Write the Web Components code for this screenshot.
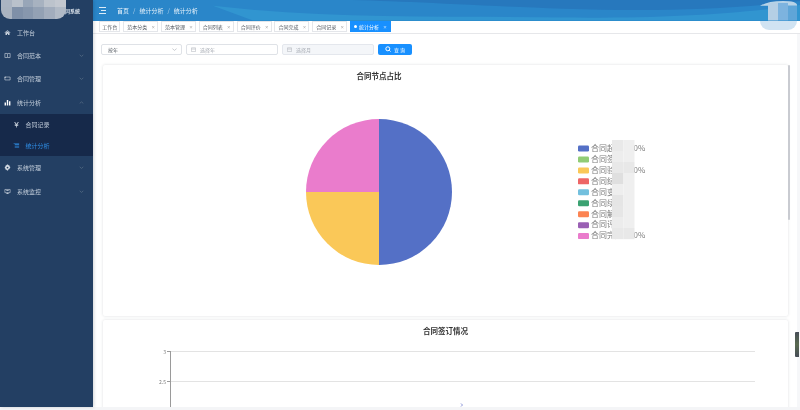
<!DOCTYPE html>
<html lang="zh">
<head>
<meta charset="utf-8">
<title>统计分析</title>
<style>
  html, body { margin: 0; height: 100%; }
  body {
    background: #f4f5f7;
    font-family: "Noto Sans CJK SC", "Noto Sans", sans-serif;
    overflow: hidden;
  }
</style>
</head>
<body>
<app-shell>
  <side-menu slot="side">
    <side-item icon="home" label="工作台"></side-item>
    <side-item icon="book" label="合同范本" arrow="down"></side-item>
    <side-item icon="card" label="合同管理" arrow="down"></side-item>
    <side-item icon="bars" label="统计分析" arrow="up" strong></side-item>
    <side-group>
      <side-item sub icon="yen" label="合同记录"></side-item>
      <side-item sub active icon="doc" label="统计分析"></side-item>
    </side-group>
    <side-item icon="gear" label="系统管理" arrow="down"></side-item>
    <side-item icon="screen" label="系统监控" arrow="down"></side-item>
  </side-menu>

  <top-bar slot="top"></top-bar>

  <tag-bar slot="top">
    <tag-item plain>工作台</tag-item>
    <tag-item>范本分类</tag-item>
    <tag-item>范本管理</tag-item>
    <tag-item>合同列表</tag-item>
    <tag-item>合同评价</tag-item>
    <tag-item>合同完成</tag-item>
    <tag-item>合同记录</tag-item>
    <tag-item active>统计分析</tag-item>
  </tag-bar>

  <filter-bar></filter-bar>

  <chart-card heading="合同节点占比" align="pie" height="251"><pie-chart></pie-chart></chart-card>
  <chart-card heading="合同签订情况" height="120"><line-chart></line-chart></chart-card>
</app-shell>

<script>
(function() {
  const ICONS = {
    home: '<path d="M1 6.2 6 2l5 4.2-.6.7L6 3.3 1.600 6.900z"/><path d="M2.600 7 6 4.200 9.400 7v3.400H7V8H5v2.400H2.600z"/>',
    book: '<path fill="none" stroke="currentColor" d="M1.500 2.500h4l.5.6.5-.6h4v7h-4l-.5.5-.5-.5h-4zM6 3v6.500"/>',
    card: '<path fill="none" stroke="currentColor" d="M1.500 3.500h9v5h-9z"/><path d="M1 3h2v1.500H1z"/>',
    bars: '<path d="M1 6h2.400v5H1zM4.800 1.500h2.400V11H4.800zM8.600 4h2.400v7H8.600z"/>',
    yen: '<path d="M2 1.500h1.600L6 5l2.400-3.500H10L7.400 5.400H9v1H6.600v1H9v1H6.600V11H5.400V8.400H3v-1h2.400v-1H3v-1h1.600z"/>',
    doc: '<path d="M1 1.500h9.500v1.200H1zM3 4h7.500v1.200H3zM3 6.400h7.500v1.200H3zM3 8.800h7.500V10H3z"/>',
    gear: '<path fill-rule="evenodd" d="M5 1h2l.3 1.400 1-.5L9.800 3.300l-.6 1 1.400.4v2l-1.400.4.600 1-1.500 1.400-1-.5L7 11H5l-.3-1.400-1 .5-1.500-1.400.6-1-1.400-.4v-2l1.400-.4-.6-1L3.700 1.900l1 .5zM6 4.500a1.500 1.500 0 1 0 0 3 1.500 1.500 0 0 0 0-3z"/>',
    screen: '<path fill="none" stroke="currentColor" d="M1.500 2.500h9v5.500h-9z"/><path d="M5.400 8h1.200v1.500H8.500v.8h-5v-.8h1.900zM4 4h4v1H4z"/>'
  };

  class AppShell extends HTMLElement {
    constructor() {
      super();
      this.attachShadow({ mode: "open" });
      this.shadowRoot.innerHTML = `
      <style>
        :host {
          display: flex;
          height: 407px;
          background: #fff;
          filter: blur(.3px);
        }
        .side { flex: 0 0 93px; width: 93px; box-shadow: 1px 0 3px rgba(0, 21, 41, .18); z-index: 1; }
        .main { flex: 1; min-width: 0; display: flex; flex-direction: column; overflow: hidden; position: relative; }
        .scroll { display: flex; flex-direction: column; padding: 0 12px 0 10px; overflow: hidden; flex: 1; }
        .thumb { position: absolute; right: 10px; top: 65px; width: 2px; height: 155px; background: #c9cbd1; border-radius: 1px; }
        .edge { position: absolute; right: 0; top: 34px; bottom: 0; width: 3px; background: #f6f7f9; }
        .widget {
          position: absolute; right: 1px; top: 332px; width: 4px; height: 25px;
          background: linear-gradient(#474d57, #5a6a50 50%, #474d57);
          border-radius: 1px 0 0 1px;
        }
      </style>
      <div class="side"><slot name="side"></slot></div>
      <div class="main">
        <slot name="top"></slot>
        <div class="scroll"><slot></slot></div>
        <div class="edge"></div>
        <div class="thumb"></div>
        <div class="widget"></div>
      </div>`;
    }
  }

  class SideMenu extends HTMLElement {
    constructor() {
      super();
      this.attachShadow({ mode: "open" });
      this.shadowRoot.innerHTML = `
      <style>
        :host { display: block; height: 100%; background: #233f63; overflow: hidden; }
        .logo { position: relative; height: 20.500px; display: flex; justify-content: flex-end; align-items: center; padding-right: 13px; color: #dfe6ee; font-size: 5px; font-weight: 700; }
        .mosaic {
          position: absolute; left: 1px; top: -6px; width: 65px; height: 25px; border-radius: 0 0 9px 9px; overflow: hidden;
          display: grid; grid-template-columns: repeat(6, 1fr); grid-template-rows: repeat(2, 1fr);
        }
        .mosaic i:nth-child(1) { background: #aab4c2; } .mosaic i:nth-child(2) { background: #b9c1cb; }
        .mosaic i:nth-child(3) { background: #98a6b8; } .mosaic i:nth-child(4) { background: #a7b2c0; }
        .mosaic i:nth-child(5) { background: #bcc3cc; } .mosaic i:nth-child(6) { background: #c3c8d0; }
        .mosaic i:nth-child(7) { background: #a9b3c0; } .mosaic i:nth-child(8) { background: #7f90a8; }
        .mosaic i:nth-child(9) { background: #8797ad; } .mosaic i:nth-child(10) { background: #93a1b4; }
        .mosaic i:nth-child(11) { background: #a2adbd; } .mosaic i:nth-child(12) { background: #b1bac6; }
      </style>
      <div class="logo"><div class="mosaic"><i></i><i></i><i></i><i></i><i></i><i></i><i></i><i></i><i></i><i></i><i></i><i></i></div><span>同系统</span></div>
      <slot></slot>`;
    }
  }

  class SideGroup extends HTMLElement {
    constructor() {
      super();
      this.attachShadow({ mode: "open" });
      this.shadowRoot.innerHTML = `
      <style>:host { display: block; background: #16294a; }</style><slot></slot>`;
    }
  }

  class SideItem extends HTMLElement {
    constructor() {
      super();
      this.attachShadow({ mode: "open" });
    }
    connectedCallback() {
      const sub = this.hasAttribute("sub");
      const active = this.hasAttribute("active");
      const arrow = this.getAttribute("arrow");
      const d = arrow === "up" ? "M1 4 4 1.500 7 4" : "M1 1.500 4 4 7 1.500";
      this.shadowRoot.innerHTML = `
      <style>
        :host {
          display: flex; align-items: center;
          height: ${sub ? 21 : 23.400}px;
          padding-left: ${sub ? 13 : 4}px;
          color: ${active ? "#2f8fe8" : "#c3cedb"};
          font-size: 6px;
        }
        svg.i { width: 7px; height: 7px; margin-right: ${sub ? 5.500 : 6}px; fill: currentColor; color: ${active ? "#2f8fe8" : "#d4dbe4"}; flex: none; }
        :host([strong]) svg.i { color: #fff; }
        span { flex: 1; }
        svg.a { width: 5px; height: 3px; margin-right: 9px; fill: none; stroke: #64798f; }
      </style>
      <svg class="i" viewBox="0 0 12 12">${ICONS[this.getAttribute("icon")] || ""}</svg>
      <span>${this.getAttribute("label")}</span>
      ${arrow ? `<svg class="a" viewBox="0 0 8 5"><path d="${d}"/></svg>` : ""}`;
    }
  }

  class TopBar extends HTMLElement {
    constructor() {
      super();
      this.attachShadow({ mode: "open" });
      this.shadowRoot.innerHTML = `
      <style>
        :host {
          display: flex; align-items: center; gap: 9px; position: relative; overflow: hidden; flex: none;
          height: 20.500px; padding-left: 6px;
          background: #2885c8; color: #e6f1fa; font-size: 6px;
        }
        .wave { position: absolute; inset: 0; width: 100%; height: 100%; }
        .burger, .crumbs { position: relative; }
        .burger { width: 7px; height: 7px; stroke: #dcecf8; fill: none; }
        .crumbs { display: flex; gap: 4px; margin-left: 2px; }
        .crumbs b { font-weight: 400; color: #bcd9ef; }
      </style>
      <svg class="wave" viewBox="0 0 707 21" preserveAspectRatio="none">
        <rect width="707" height="21" fill="#2a86c9"/>
        <path d="M0 0h707v1C640 10 560 12 470 9 360 5 300 0 240 0z" fill="#2778bd"/>
        <path d="M120 6C240 20 360 16 470 18 570 19 650 14 707 5v16H160z" fill="#3195d0"/>
        <path d="M667 6Q675 1 690 1T704 6z" fill="#b7d3e8"/>
        <rect x="675" y="3" width="10" height="18" fill="#b5cfe5"/>
        <rect x="685" y="3" width="10" height="18" fill="#7db3df"/>
        <rect x="695" y="6" width="9" height="15" fill="#5fa5d8"/>
      </svg>
      <svg class="burger" viewBox="0 0 7 7"><path d="M0 .5h7M2 3.500h5M0 6.500h7"/></svg>
      <div class="crumbs"><span>首页</span><b>/</b><span>统计分析</span><b>/</b><span>统计分析</span></div>`;
    }
  }

  class TagBar extends HTMLElement {
    constructor() {
      super();
      this.attachShadow({ mode: "open" });
      this.shadowRoot.innerHTML = `
      <style>
        :host {
          display: flex; align-items: center; gap: 2.800px; flex: none;
          height: 13.500px; padding-left: 6px; box-sizing: border-box;
          background: #fff; border-bottom: 1px solid #e6e7ea; position: relative;
        }
        .blot { position: absolute; right: 3px; top: 0; width: 37px; height: 9px; background: #d0e3f2; border-radius: 0 0 14px 14px; }
      </style>
      <slot></slot><div class="blot"></div>`;
    }
  }

  class TagItem extends HTMLElement {
    constructor() {
      super();
      this.attachShadow({ mode: "open" });
    }
    connectedCallback() {
      const plain = this.hasAttribute("plain");
      const active = this.hasAttribute("active");
      this.shadowRoot.innerHTML = `
      <style>
        :host {
          display: flex; align-items: center; box-sizing: border-box;
          height: 11px; padding: 0 ${plain ? 2.200 : active ? 3 : 2}px 0 ${plain ? 2.200 : 3}px;
          border: 1px solid ${active ? "#1890ff" : "#e4e6ea"};
          background: ${active ? "#1890ff" : "#fff"};
          color: ${active ? "#fff" : "#50565e"};
          font-size: 5px; white-space: nowrap;
        }
        .dot { width: 3px; height: 3px; border-radius: 50%; background: #fff; margin-right: 2px; }
        .x { margin-left: 4px; font-size: 4px; color: ${active ? "#fff" : "#888"}; }
      </style>
      ${active ? '<i class="dot"></i>' : ""}<slot></slot>${plain ? "" : '<span class="x">×</span>'}`;
    }
  }

  class FilterBar extends HTMLElement {
    constructor() {
      super();
      this.attachShadow({ mode: "open" });
      const cal = '<svg class="c" viewBox="0 0 6 6"><path d="M.5 1h5v4.500h-5zM.5 2.500h5"/></svg>';
      this.shadowRoot.innerHTML = `
      <style>
        :host { display: flex; flex: none; gap: 4px; align-items: center; height: 30.500px; margin-left: -2px; box-sizing: border-box; font-size: 5px; }
        .f { display: flex; align-items: center; box-sizing: border-box; height: 11.500px; border: 1px solid #dfe2e7; border-radius: 2px; color: #a8adb5; background: #fff; padding: 0 4px; }
        .sel { width: 81px; color: #5c626a; padding-left: 6px; }
        .sel span { flex: 1; }
        .sel svg { width: 5px; height: 3px; fill: none; stroke: #a9adb4; }
        .date { width: 92px; }
        .off { background: #f4f6f9; border-color: #e4e7ed; }
        .c { width: 5px; height: 5px; margin-right: 4px; fill: none; stroke: #b5b9c0; stroke-width: .7; }
        button {
          all: unset; box-sizing: border-box; display: flex; align-items: center; justify-content: center; gap: 3px;
          width: 34px; height: 11.500px; background: #1890ff; border-radius: 2px; color: #fff; font-size: 5px;
        }
        button svg { width: 6px; height: 6px; fill: none; stroke: #fff; }
      </style>
      <div class="f sel"><span>按年</span><svg viewBox="0 0 8 5"><path d="M.5 1 4 4 7.500 1"/></svg></div>
      <div class="f date">${cal}<span>选择年</span></div>
      <div class="f date off">${cal}<span>选择月</span></div>
      <button><svg viewBox="0 0 6 6"><circle cx="2.800" cy="2.800" r="2"/><path d="m4.300 4.300 1.200 1.200"/></svg>查 询</button>`;
    }
  }

  class ChartCard extends HTMLElement {
    constructor() {
      super();
      this.attachShadow({ mode: "open" });
    }
    connectedCallback() {
      const pie = this.getAttribute("align") === "pie";
      this.shadowRoot.innerHTML = `
      <style>
        :host {
          display: block; flex: none; box-sizing: border-box; position: relative;
          height: ${this.getAttribute("height")}px; margin-bottom: 4px;
          background: #fff; border-radius: 2px;
          box-shadow: 0 0 3px rgba(40, 50, 70, .16);
        }
        h3 {
          margin: 0; height: 22px; line-height: 22px; font-size: 7.500px; font-weight: 700; color: #333;
          ${pie ? "width: 552px;" : ""} text-align: center;
        }
      </style>
      <h3>${this.getAttribute("heading")}</h3>
      <slot></slot>`;
    }
  }

  class PieChart extends HTMLElement {
    constructor() {
      super();
      this.attachShadow({ mode: "open" });
      const legend = [
        ["合同起草", "#5470c6", "0%"],
        ["合同签订", "#91cc75", ""],
        ["合同验收", "#fac858", "0%"],
        ["合同结算", "#ee6666", ""],
        ["合同变更", "#73c0de", ""],
        ["合同续签", "#3ba272", ""],
        ["合同解除", "#fc8452", ""],
        ["合同评价", "#9a60b4", ""],
        ["合同完成", "#ea7ccc", "0%"]
      ];
      const rows = legend.map((l, i) => {
        const y = 61.500 + i * 10.950;
        return `<rect x="475" y="${y - 3}" width="11" height="6" rx="1.200" fill="${l[1]}"/>
          <text x="488" y="${y + 2.300}">${l[0]}</text>
          ${l[2] ? `<text x="530.500" y="${y + 2.300}">${l[2]}</text>` : ""}`;
      }).join("");
      const shades = ["#e9e9e9", "#ededed", "#e8e8e8", "#dfdfdf", "#eeeeee", "#e5e5e5", "#e6e6e6", "#ececec", "#e8e8e8"];
      const mask = shades.map((c, i) =>
        `<rect x="509" y="${53 + i * 11}" width="11.500" height="11.200" fill="${c}"/><rect x="520.500" y="${53 + i * 11}" width="11" height="11.200" fill="${i === 2 || i === 8 ? "#e8e8e8" : "#efefef"}"/>`
      ).join("");
      this.shadowRoot.innerHTML = `
      <style>
        :host { display: block; }
        svg { display: block; width: 685px; height: 229px; }
        text { font-size: 8px; fill: #7d7d7d; }
      </style>
      <svg viewBox="0 0 685 229">
        <path d="M276 32A73 73 0 0 1 276 178z" fill="#5470c6"/>
        <path d="M276 178A73 73 0 0 1 203 105H276z" fill="#fac858"/>
        <path d="M203 105A73 73 0 0 1 276 32V105z" fill="#ea7ccc"/>
        ${rows}
        ${mask}
      </svg>`;
    }
  }

  class LineChart extends HTMLElement {
    constructor() {
      super();
      this.attachShadow({ mode: "open" });
      this.shadowRoot.innerHTML = `
      <style>
        :host { display: block; }
        svg { display: block; width: 685px; height: 98px; }
        text { font-size: 5px; fill: #777; text-anchor: end; }
      </style>
      <svg viewBox="0 0 685 98">
        <path d="M67 9.500H652M67 39.500H652" stroke="#e3e3e3" fill="none"/>
        <path d="M67.500 9V98M64 9.500h3.500M64 39.500h3.500" stroke="#9a9a9a" fill="none"/>
        <text x="63" y="11.500">3</text>
        <text x="63" y="41.500">2.5</text>
        <path d="M358 61.500l1.500 1.500-1.500 1.500" stroke="#8a94d8" fill="none"/>
      </svg>`;
    }
  }

  customElements.define("app-shell", AppShell);
  customElements.define("side-menu", SideMenu);
  customElements.define("side-group", SideGroup);
  customElements.define("side-item", SideItem);
  customElements.define("top-bar", TopBar);
  customElements.define("tag-bar", TagBar);
  customElements.define("tag-item", TagItem);
  customElements.define("filter-bar", FilterBar);
  customElements.define("chart-card", ChartCard);
  customElements.define("pie-chart", PieChart);
  customElements.define("line-chart", LineChart);
})();
</script>
</body>
</html>
